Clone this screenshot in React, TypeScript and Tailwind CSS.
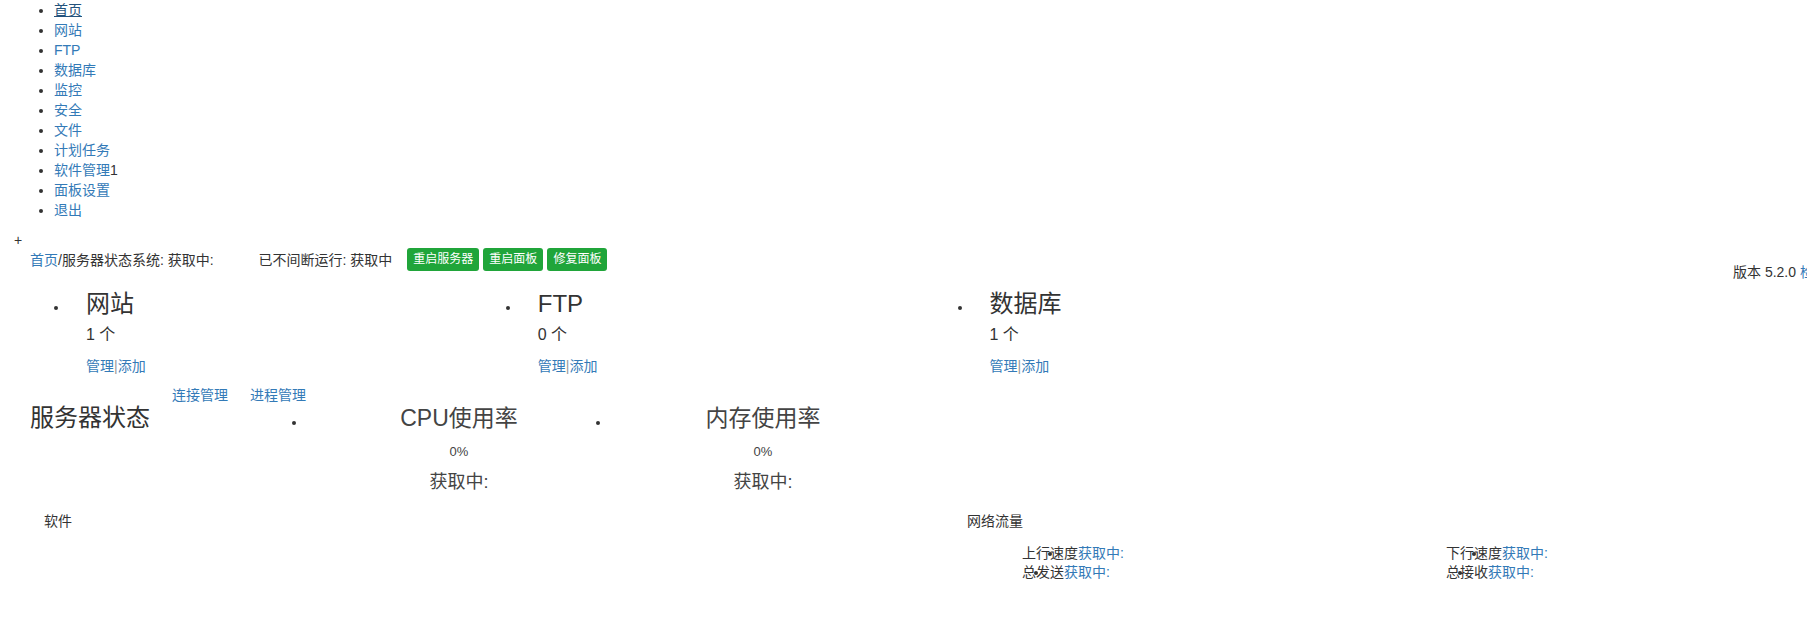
import React from "react";

interface navItemProps {
	label: string;
	active?: boolean;
	badge?: string;
}

const navItems: navItemProps[] = [
	{ label: "首页", active: true },
	{ label: "网站" },
	{ label: "FTP" },
	{ label: "数据库" },
	{ label: "监控" },
	{ label: "安全" },
	{ label: "文件" },
	{ label: "计划任务" },
	{ label: "软件管理", badge: "1" },
	{ label: "面板设置" },
	{ label: "退出" },
];

const overviewCards = [
	{ title: "网站", count: "1" },
	{ title: "FTP", count: "0" },
	{ title: "数据库", count: "1" },
];

const usageCols = ["CPU使用率", "内存使用率"];

function Dot() {
	return <span className="block w-[4px] h-[4px] rounded-full bg-[#333]" />;
}

// the tiny dot that sits inside the network labels
function InlineDot() {
	return (
		<span className="inline-block w-[4px] h-[4px] -mx-[2px] rounded-full bg-[#333] align-middle relative z-10" />
	);
}

function App() {
	return (
		<div className="w-[1807px] h-[638px] overflow-hidden bg-white text-[#333] text-[14px] leading-[20px] font-['Liberation_Sans','Noto_Sans_CJK_SC',sans-serif]">
			{/* top nav, unstyled list */}
			<ul className="list-disc pl-[54px]">
				{navItems.map((item, index) => (
					<li key={index} className="h-[20px]">
						<a
							href="#"
							className={
								item.active
									? "text-[#23527c] underline"
									: "text-[#337ab7]"
							}
						>
							{item.label}
						</a>
						{item.badge && <span>{item.badge}</span>}
					</li>
				))}
			</ul>

			<div className="mt-[10px] h-[18px] pl-[14px]">+</div>

			{/* breadcrumb + actions */}
			<div className="flex items-start">
				<div className="flex items-center h-[23px] pl-[30px] whitespace-nowrap">
					<a href="#" className="text-[#337ab7]">
						首页
					</a>
					<span>/服务器状态系统: 获取中:</span>
					<span className="ml-[45px]">已不间断运行: 获取中</span>
					<div className="flex gap-[4px] ml-[15px]">
						{["重启服务器", "重启面板", "修复面板"].map((label) => (
							<button
								key={label}
								type="button"
								className="h-[23px] px-[6px] rounded-[3px] bg-[#20a53a] text-white text-[12px] leading-[23px]"
							>
								{label}
							</button>
						))}
					</div>
				</div>
				<div className="ml-auto w-[74px] shrink-0 mt-[14px] whitespace-nowrap">
					版本 5.2.0{" "}
					<a href="#" className="text-[#337ab7]">
						检查更新
					</a>
				</div>
			</div>

			{/* overview cards */}
			<div className="grid grid-cols-4 mt-[7px]">
				{overviewCards.map((card) => (
					<div key={card.title} className="flex pl-[54px]">
						<div className="w-[32px] shrink-0 pt-[17px]">
							<Dot />
						</div>
						<div className="whitespace-nowrap">
							<div className="text-[24px] leading-[30px] text-[#333]">
								{card.title}
							</div>
							<div className="mt-[6px] text-[16px] leading-[20px]">
								{card.count} 个
							</div>
							<div className="mt-[11px] text-[#337ab7]">
								<a href="#">管理</a>
								<span className="text-[#999]">|</span>
								<a href="#">添加</a>
							</div>
						</div>
					</div>
				))}
			</div>

			{/* server status */}
			<div className="flex mt-[9px]">
				<div className="w-[286px] shrink-0 flex flex-col whitespace-nowrap">
					<div className="flex h-[20px] pl-[172px] text-[#337ab7]">
						<a href="#">连接管理</a>
						<a href="#" className="ml-[22px]">
							进程管理
						</a>
					</div>
					<div className="pl-[30px] text-[24px] leading-[26px]">
						服务器状态
					</div>
				</div>
				{usageCols.map((title) => (
					<div key={title} className="w-[304px] shrink-0 flex">
						<div className="w-[16px] shrink-0 pt-[36px] flex justify-center">
							<Dot />
						</div>
						<div className="flex-1 pl-[26px] pt-[20px] text-center text-[#444]">
							<div className="text-[23px] leading-[26px] whitespace-nowrap">
								{title}
							</div>
							<div className="mt-[11px] text-[13px] leading-[20px]">
								0%
							</div>
							<div className="mt-[8px] text-[18px] leading-[24px]">
								获取中:
							</div>
						</div>
					</div>
				))}
			</div>

			{/* software + network traffic */}
			<div className="flex mt-[17px]">
				<div className="w-[967px] shrink-0 pl-[44px]">软件</div>
				<div className="flex-1 whitespace-nowrap">
					<div>网络流量</div>
					<div className="flex mt-[13px] leading-[19px]">
						<div className="w-[479px] shrink-0 pl-[55px]">
							<div>
								上行
								<InlineDot />
								速度
								<span className="text-[#337ab7]">获取中:</span>
							</div>
							<div>
								总<InlineDot />
								发送
								<span className="text-[#337ab7]">获取中:</span>
							</div>
						</div>
						<div>
							<div>
								下行
								<InlineDot />
								速度
								<span className="text-[#337ab7]">获取中:</span>
							</div>
							<div>
								总<InlineDot />
								接收
								<span className="text-[#337ab7]">获取中:</span>
							</div>
						</div>
					</div>
				</div>
			</div>
		</div>
	);
}

export default App;
